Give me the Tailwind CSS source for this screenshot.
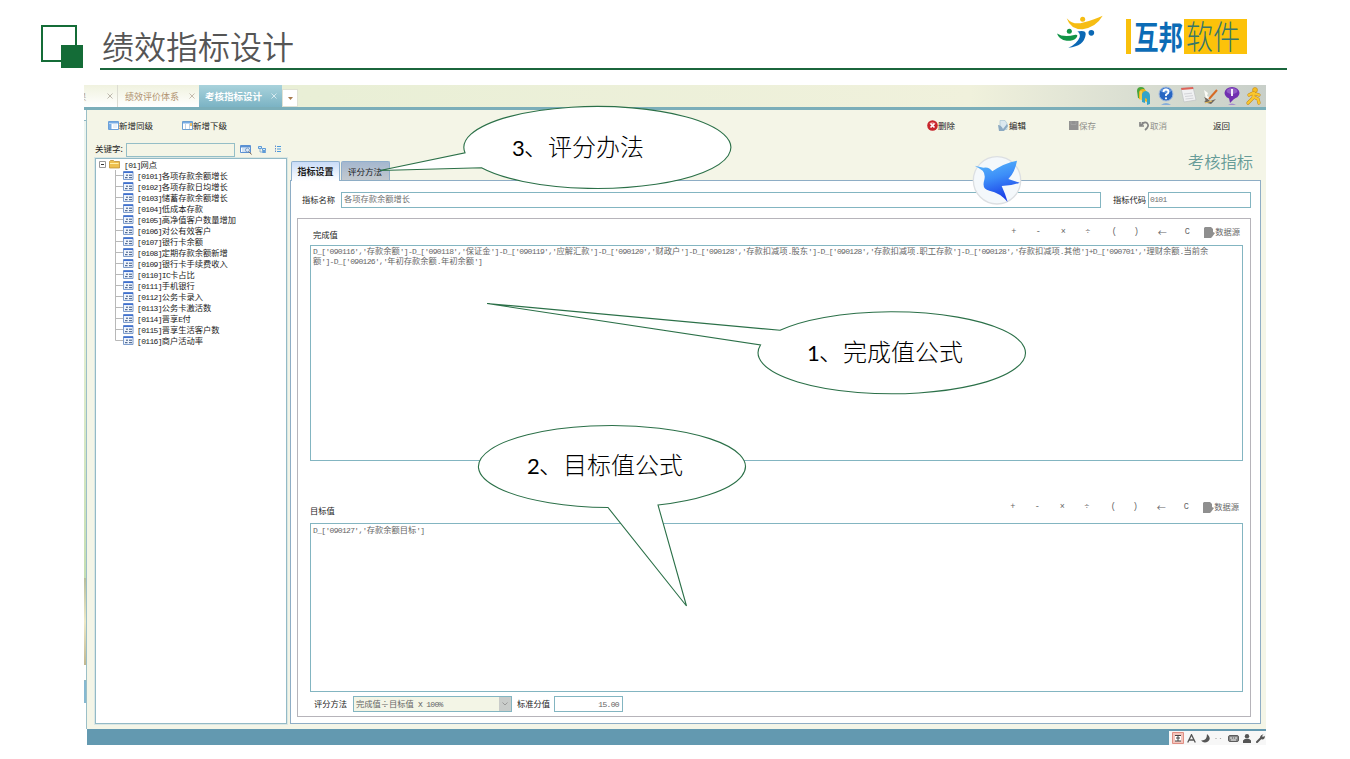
<!DOCTYPE html>
<html lang="zh-CN">
<head>
<meta charset="utf-8">
<title>绩效指标设计</title>
<script src="https://cdn.jsdelivr.net/npm/@tailwindcss/browser@4"></script>
</head>
<body class="relative w-[1350px] h-[759px] overflow-hidden bg-white font-['Noto_Sans_CJK_SC',sans-serif] text-[8.25px] leading-[11px] text-[#1c1c1c] whitespace-nowrap">

<!-- slide header -->
<header class="flex h-[85px] pl-[41px]">
  <svg class="mt-[25px] w-[42px] h-[43px]" viewBox="0 0 42 43"><rect x="1" y="1" width="34" height="35" fill="none" stroke="#146c37" stroke-width="2"/><rect x="20" y="20" width="22" height="23" fill="#146c37"/></svg>
  <div class="ml-[17px] mt-[20px] w-[1187px] h-[50px] border-b-2 border-[#1b663c] flex">
    <h1 class="ml-[2px] mt-[2px] text-[32px] leading-[46px] text-[#555] font-[350]">绩效指标设计</h1>
    <div class="ml-[761px] -mt-[7px] flex">
      <svg class="w-[50px] h-[37px]" viewBox="45 25 150 110">
        <path d="M80 40Q100 62 130 53Q165 44 188 33Q168 68 128 73Q92 74 80 40" fill="#f6bd13"/><path d="M100 47Q125 60 150 42L128 34Z" fill="#fff"/><circle cx="128" cy="43" r="7.5" fill="#f6bd13"/>
        <path d="M51 86Q70 99 106 90Q117 89 108 100Q98 109 80 108Q57 105 51 86" fill="#119447"/><circle cx="88" cy="79" r="7.5" fill="#119447"/>
        <path d="M112 80Q139 75 137 89Q133 124 85 129Q112 116 119 97Q122 86 112 80" fill="#0b68b4"/><circle cx="154" cy="84" r="8.5" fill="#0b68b4"/>
      </svg>
      <div class="ml-[21px] mt-[6px] w-[5px] h-[35px] bg-[#f9c00c]"></div>
      <div class="ml-[3px] mt-[5px] w-[50px] h-[35px] flex items-center text-[24.5px] font-bold text-[#0c6cb6]"><span class="scale-y-[1.28]">互邦</span></div>
      <div class="mt-[6px] w-[63px] h-[35px] bg-[#fcc20a] flex items-center pl-[2px] pb-[2px] text-[27px] font-light text-[#36766b]"><span class="scale-y-[1.2]">软件</span></div>
    </div>
  </div>
</header>

<main class="ml-[84px] w-[1182px] h-[660px] flex flex-col">
  <!-- window tabs -->
  <nav class="h-[25px] border-b-3 border-[#7baeb9] flex bg-linear-to-r from-[#e9efd6] from-20% via-[#f0f1dc] via-75% to-[#c8cfc9]">
    <div class="w-[34px] bg-linear-to-b from-[#f0f2df] to-white border-r border-[#dcdcd2] flex items-center text-[#b1a08c] overflow-hidden"><span class="-ml-[6px]">果</span><svg class="ml-[21px] w-[6px] h-[6px]" viewBox="0 0 6 6"><path d="M.5.5l5 5m0-5l-5 5" stroke="#bdb8ac"/></svg></div>
    <div class="w-[81px] bg-linear-to-b from-[#f0f2df] to-white flex items-center pl-[7px] text-[#b0926f] text-[9px]">绩效评价体系<svg class="ml-[10px] w-[6px] h-[6px]" viewBox="0 0 6 6"><path d="M.5.5l5 5m0-5l-5 5" stroke="#c4bcae"/></svg></div>
    <div class="w-[83px] bg-linear-to-b from-[#a9d3dc] to-[#7bb3c4] flex items-center pl-[6px] text-white text-[9.5px] font-bold">考核指标设计<svg class="ml-[9px] w-[6px] h-[6px]" viewBox="0 0 6 6"><path d="M.5.5l5 5m0-5l-5 5" stroke="#d5e9ef"/></svg></div>
    <div class="w-[16px] h-[18px] mt-[4px] bg-white border border-[#e0e2d4] flex items-center justify-center"><svg class="w-[5px] h-[3px]" viewBox="0 0 5 3"><path d="M0 0h5L2.500 3z" fill="#a77a4c"/></svg></div>
    <div class="ml-auto flex gap-[4px] pt-[1px] pr-[3px]">
      <svg class="w-[18px] h-[20px]" viewBox="0 0 18 20"><path d="M2 5q0-4 4-4t4 4v9l-7-2z" fill="#4aa53a"/><path d="M4 6q1-3 4-3t4 4v9l-8-3z" fill="#edb520"/><path d="M7 16V8q1-3 4-3 4 1 4 5v8l-3 1v-6l-2-1v5z" fill="#35a4c8"/><path d="M6 5v9" stroke="#f8e67b"/></svg>
      <svg class="w-[18px] h-[20px]" viewBox="0 0 18 20"><circle cx="9" cy="8" r="7" fill="#2866c2" stroke="#a5bdde"/><path d="M3 5q6-6 12 0-6 4-12 0" fill="#79a9e9" opacity=".7"/><path d="M6.500 6q0-2.500 2.500-2.500T11.500 6Q11.500 7.500 9 8.500V10" fill="none" stroke="#fff" stroke-width="1.800"/><circle cx="9" cy="12.300" r="1.100" fill="#fff"/><path d="M4 19q5-4 10 0" fill="#86aedb"/></svg>
      <svg class="w-[18px] h-[20px]" viewBox="0 0 18 20"><path d="M2 2l12-1 3 13-12 2z" fill="#f0f1f2" stroke="#bfc1c3" stroke-width=".7"/><path d="M2 2l12-1 .5 2-12 1z" fill="#dd6358"/><path d="M5 8l8-.8M6 10.500l8-.8M6.500 13l8-.8" stroke="#d3d4d8"/></svg>
      <svg class="w-[18px] h-[20px]" viewBox="0 0 18 20"><path d="M3 4l4 3-1 3 4 2-5 1" fill="#fbfbf5"/><path d="M3 11q3 1 6 4l6-2-5 5-7-2q3-1 0-5" fill="#70675e"/><path d="M8 13L16 4" stroke="#d66a25" stroke-width="2"/><path d="M4 17l7-2" stroke="#ecc15a"/></svg>
      <svg class="w-[18px] h-[20px]" viewBox="0 0 18 20"><ellipse cx="9" cy="7" rx="7.500" ry="6" fill="#7130b0"/><path d="M6 12l1 5 5-5z" fill="#7130b0"/><ellipse cx="9" cy="5" rx="5.500" ry="3" fill="#a97bd5" opacity=".6"/><path d="M9 3v7" stroke="#fff" stroke-width="1.800"/><path d="M5 19q4-3 8 0" fill="#a48acd"/></svg>
      <svg class="w-[18px] h-[20px]" viewBox="0 0 18 20"><circle cx="10" cy="4" r="2.500" fill="#f6bd20" stroke="#c58a18" stroke-width=".6"/><path d="M8 7L4 9M9 7l-1 5-5 5M9 11l4 2 1 4M11 8l3 1" fill="none" stroke="#c58a18" stroke-width="3.200" stroke-linecap="round"/><path d="M8 7L4 9M9 7l-1 5-5 5M9 11l4 2 1 4M11 8l3 1" fill="none" stroke="#fac72e" stroke-width="2.300" stroke-linecap="round"/></svg>
    </div>
  </nav>

  <div class="flex h-[619px]">
    <!-- sliver of the page behind -->
    <div class="w-[3px] h-[619px] flex flex-col bg-[#e9f1dd] border-r border-[#9bbfc7]">
      <div class="h-[11px] bg-white border-b border-[#8fb7c3]"></div>
      <div class="h-[457px] bg-linear-to-b from-[#edf5f1] via-[#e2eed0] to-[#c6dfb2]"></div>
      <div class="h-[87px] bg-linear-to-b from-[#b9bf9b] via-[#eee9c6] to-[#c2b890]"></div>
      <div class="h-[16px] bg-white border-b border-[#8fb7c3]"></div>
      <div class="h-[22px] bg-[#86b9d1]"></div>
      <div class="flex-1 bg-white"></div>
    </div>

    <div class="w-[202px] bg-[#f4f5e7] pl-[8px] flex flex-col">
      <div class="h-[33px] flex items-center pl-[13px] pb-[2px]">
        <svg class="w-[11px] h-[9px]" viewBox="0 0 11 9"><path d="M.5.5h10v8H.5z" fill="#fff" stroke="#6b9fd8"/><path d="M1 1h9v1.500H1zM1 3h2.500v5H1z" fill="#77ace4"/><path d="M5 4h4M5 6h4" stroke="#d5e3f2"/></svg><span class="text-[8.5px] mr-[29px]">新增同级</span>
        <svg class="w-[11px] h-[9px]" viewBox="0 0 11 9"><path d="M.5.5h10v8H.5z" fill="#fff" stroke="#6b9fd0"/><path d="M1 1h9v1.500H1z" fill="#77ace4"/><path d="M3.500 3v5M7.500 3v5" stroke="#c3d2e0"/><path d="M8 2h2v3H8z" fill="#edbe64"/></svg><span class="text-[8.5px]">新增下级</span>
      </div>
      <div class="h-[14px] flex items-center">
        <span class="w-[31px] -mt-[3px] text-[8.5px]">关键字:</span>
        <div class="w-[109px] h-[14px] border border-[#94bec7]"></div>
        <svg class="ml-[5px] -mt-[2px] w-[12px] h-[11px]" viewBox="0 0 12 11"><path d="M.5 1.500h10v7H.5z" fill="#fff" stroke="#5b91d3"/><path d="M1 2h9v1.500H1z" fill="#5b91d3"/><path d="M2 5h5M2 7h4" stroke="#a5c6ea"/><circle cx="7.500" cy="6" r="2" fill="#dceafa" stroke="#658ebd" stroke-width=".8"/><path d="M9 7.500l2.500 3" stroke="#77624e"/></svg>
        <svg class="ml-[6px] -mt-[2px] w-[9px] h-[9px]" viewBox="0 0 9 9"><path d="M.5 1.500h3v2h-3zM4.500 3.500h3v2h-3zM4.500 6.500h3v1h-3z" fill="#d6ebfb" stroke="#3e86d0" stroke-width=".8"/><path d="M2 4v3h2" fill="none" stroke="#79a3cf" stroke-width=".8"/></svg>
        <svg class="ml-[7px] -mt-[2px] w-[8px] h-[8px]" viewBox="0 0 8 8"><path d="M1.500.5v7" stroke="#6a8fcb" stroke-dasharray="1.500 1"/><path d="M3 1.500h4M3 4h4M3 6.500h4" stroke="#4a9ade"/></svg>
      </div>
      <div class="mt-px w-[192px] h-[566px] border border-[#93bac6] outline outline-[#dbe7e4] bg-white">
        <div class="h-[11px] flex items-center pl-[3px]">
          <svg class="w-[7px] h-[7px]" viewBox="0 0 7 7"><path d="M.5.500h6v6h-6z" fill="#fff" stroke="#989898"/><path d="M2 3.500h3" stroke="#333"/></svg>
          <svg class="ml-[3px] w-[11px] h-[9px]" viewBox="0 0 11 9"><path d="M.5 1.500l1-1h3l1 1h5v6.500H.5z" fill="#eec050" stroke="#b78628" stroke-width=".7"/><path d="M1 3h9l-1 1H1z" fill="#fff0a8"/></svg>
          <span class="ml-[4px]" data-mix>[01]网点</span>
        </div>
        <ul id="tree"></ul>
      </div>
    </div>

    <div class="w-[977px] bg-[#f4f5e7] flex flex-col pr-[5px]">
      <div class="h-[33px] flex items-center pl-[638px] pb-[2px] text-[8.5px]">
        <svg class="w-[11px] h-[11px]" viewBox="0 0 11 11"><circle cx="5.500" cy="5.500" r="5.300" fill="#c7262d"/><path d="M2 4q3-4 7 0" fill="#e8787b"/><path d="M3.500 3.500l4 4m0-4l-4 4" stroke="#fff" stroke-width="1.700"/></svg><span class="w-[60px]">删除</span>
        <svg class="w-[11px] h-[11px]" viewBox="0 0 11 11"><path d="M2 .5h5l2 3v6H2z" fill="#dbe8ef" stroke="#a9c5d5" stroke-width=".7"/><path d="M0 5q3 0 5 4l4-5 1 2-4 5H1z" fill="#8ba9c2"/></svg><span class="w-[60px]">编辑</span>
        <svg class="w-[10px] h-[9px]" viewBox="0 0 10 9"><path d="M0 0h9.500v9H0z" fill="#929292"/><path d="M2 0v3.500h5V0" fill="none" stroke="#acacac" stroke-width=".6"/></svg><span class="w-[60px] text-[#8f8f8a]">保存</span>
        <svg class="w-[11px] h-[10px]" viewBox="0 0 11 10"><path d="M1 1v4h4M3.500 1v3M1.500 5Q5 0 8 2q3 3-2 7" fill="none" stroke="#858585" stroke-width="1.700"/></svg><span class="w-[63px] text-[#8f8f8a]">取消</span>
        <span>返回</span>
      </div>
      <div class="h-[37px] flex">
        <div class="mt-[18px] ml-[2px] w-[49px] h-[20px] z-10 border border-b-0 border-[#8fb0ce] rounded-t-[2px] bg-linear-to-b from-[#c9dcf7] to-white pt-[4px] text-center font-bold text-[9px]">指标设置</div>
        <div class="mt-[18px] ml-px w-[49px] h-[19px] border border-b-0 border-[#90aecb] rounded-t-[2px] bg-linear-to-b from-[#a4b7cf] to-[#c3c9cf] pt-[4px] pr-px text-center text-[8.5px]">评分方法</div>
        <div class="ml-auto mr-[8px] pt-[8px] text-[16.3px] leading-[20px] text-[#669b98] font-[350]">考核指标</div>
      </div>

      <!-- tab page -->
      <div class="w-[971px] ml-px h-[544px] border border-[#8eadc5] bg-white px-[6px] pb-[6px] flex flex-col">
        <div class="h-[37px] flex pt-[11px]">
          <span class="pl-[5px] pt-[2px] w-[44px]">指标名称</span>
          <div class="w-[760px] h-[16px] border border-[#83b5c1] pl-[2px] text-[#707070] leading-[11px]">各项存款余额增长</div>
          <span class="ml-[12px] pt-[2px] w-[35px]">指标代码</span>
          <div class="w-[103px] h-[16px] border border-[#83b5c1] pl-px text-[#707070] leading-[11px]" data-mix>0101</div>
        </div>
        <section class="w-[954px] h-[499px] border border-[#b6b4ba] pl-[12px]">
          <div class="h-[26px] flex items-center pr-[10px]">
            <span class="ml-[3px] mt-[4px]">完成值</span>
            <div class="ops ml-auto flex items-center text-[#666]"></div>
          </div>
          <div class="w-[933px] h-[216px] border border-[#83b5c1] pl-[2px] leading-[9.5px] text-[#666]"><p data-mix>D_['090116','存款余额']-D_['090118','保证金']-D_['090119','应解汇款']-D_['090120','财政户']-D_['090128','存款扣减项.股东']-D_['090128','存款扣减项.职工存款']-D_['090128','存款扣减项.其他']+D_['090701','理财余额.当前余</p><p data-mix>额']-D_['090126','年初存款余额.年初余额']</p></div>
          <div class="h-[62px] flex items-end pr-[11px] pb-[10px]">
            <span class="-mb-[3px]">目标值</span>
            <div class="ops ml-auto flex items-center text-[#666]"></div>
          </div>
          <div class="w-[933px] h-[169px] border border-[#83b5c1] pl-[2px] leading-[10px] text-[#666]"><p data-mix>D_['090127','存款余额目标']</p></div>
          <div class="flex items-start pt-[4px]">
            <span class="ml-[4px] mt-[2px] w-[39px]">评分方法</span>
            <div class="w-[159px] h-[16px] border border-[#83b5c1] bg-[#f3f5e6] pl-[2px] flex text-[#666] leading-[12px]"><span data-mix>完成值÷目标值 X 100%</span><div class="ml-auto w-[12px] h-[14px] bg-[#c9ccca] flex items-center justify-center"><svg class="w-[6px] h-[4px]" viewBox="0 0 6 4"><path d="M.5.500L3 3 5.500.500" fill="none" stroke="#999"/></svg></div></div>
            <span class="ml-[5px] mt-[2px] w-[37px]">标准分值</span>
            <div class="w-[69px] h-[16px] border border-[#83b5c1] pr-[3px] text-right text-[#666] leading-[12px]" data-mix>15.00</div>
          </div>
        </section>
      </div>
    </div>
  </div>

  <!-- status bar with input-method tray -->
  <footer class="ml-[3px] h-[16px] bg-[#6399b0] flex justify-end pt-[2px]">
    <div class="w-[97px] h-[14px] bg-[#f7f7f7] flex items-center pl-[3px]">
      <svg class="w-[12px] h-[12px]" viewBox="0 0 12 12"><path d="M.5.500h11v11H.5z" fill="#f3c5bd" stroke="#e08e83"/><path d="M3 3h6v6H3z" fill="#fff"/><path d="M3 3.500h6M6 3.500V9M3 9h6M4 6h4" stroke="#444"/></svg>
      <svg class="ml-[3px] w-[9px] h-[9px]" viewBox="0 0 9 9"><path d="M.7 8.500L4.500.700l3.800 7.800M2 6h5" fill="none" stroke="#555" stroke-width="1.300"/></svg>
      <svg class="ml-[5px] w-[9px] h-[9px]" viewBox="0 0 9 9"><path d="M6 0q5 4 1 7.500Q3 10 0 6.500 6 7 6 0" fill="#555"/></svg>
      <svg class="ml-[5px] w-[7px] h-[9px]" viewBox="0 0 7 9"><path d="M1 4v1M5.500 4v1" stroke="#aaa" stroke-width="1.200"/></svg>
      <svg class="ml-[6px] w-[11px] h-[7px]" viewBox="0 0 11 7"><rect x=".5" y=".5" width="10" height="6" rx="1.500" fill="#888" stroke="#5c5c5c"/><path d="M2 3h2m1 0h1m1 0h2M3 5h5" stroke="#eee"/></svg>
      <svg class="ml-[4px] w-[8px] h-[9px]" viewBox="0 0 8 9"><circle cx="4" cy="2.300" r="2.200" fill="#555"/><path d="M0 9V6.500Q2 4 4 5q2-1 4 1.500V9z" fill="#555"/></svg>
      <svg class="ml-[5px] w-[9px] h-[9px]" viewBox="0 0 9 9"><path d="M1 8l4-4" stroke="#555" stroke-width="2" stroke-linecap="round"/><path d="M7.500.500L6 2l1 1 1.500-1.200Q9.500 4.500 7 5.500 4 5.500 4 3 5 0 7.500.500" fill="#555"/></svg>
    </div>
  </footer>
</main>

<!-- bird badge floating over the form -->
<svg class="absolute left-[972px] top-[155px] w-[50px] h-[50px]" viewBox="216 150 150 150">
  <defs><linearGradient id="bird" x1="0" y1="0" x2="0.300" y2="1"><stop offset="0" stop-color="#5cbcfb"/><stop offset=".5" stop-color="#3c8df8"/><stop offset="1" stop-color="#1a3fe8"/></linearGradient></defs>
  <circle cx="291" cy="226" r="71" fill="#f4f8fb" stroke="#dcdfe2" stroke-width="4"/>
  <path d="M224 182L250 188Q267 184 277 199Q312 174 351 167Q345 202 325 222L359 233Q335 243 305 243Q315 264 323 291Q300 263 268 257Q244 252 253 224Q257 207 248 197Q236 188 224 182Z" fill="url(#bird)"/>
</svg>

<!-- speech-bubble callouts -->
<svg class="absolute inset-0 w-[1350px] h-[759px]" viewBox="0 0 1350 759" fill="#fff" stroke="#2b7048" stroke-width="1.100">
  <path d="M465 152.800A133.500 41 0 1 1 481.500 167.800L380 170.500Z"/>
  <path d="M780 330.300A133.700 41 0 1 1 760.500 345L487 303.500Z"/>
  <path d="M608 507.500A133.500 41 0 1 1 658 505L686.500 606Z"/>
</svg>
<div class="absolute left-[512px] top-[130px] text-[24px] leading-[32px] text-black font-light"><span class="inline-block w-[12px] font-['Lato'] font-normal text-[22px]">3</span>、评分办法</div>
<div class="absolute left-[807px] top-[335px] text-[24px] leading-[32px] text-black font-light"><span class="inline-block w-[12px] font-['Lato'] font-normal text-[22px]">1</span>、完成值公式</div>
<div class="absolute left-[527px] top-[448px] text-[24px] leading-[32px] text-black font-light"><span class="inline-block w-[12px] font-['Lato'] font-normal text-[22px]">2</span>、目标值公式</div>

<script>
const items = ['[0101]各项存款余额增长','[0102]各项存款日均增长','[0103]储蓄存款余额增长','[0104]低成本存款','[0105]高净值客户数量增加','[0106]对公有效客户','[0107]银行卡余额','[0108]定期存款余额新增','[0109]银行卡手续费收入','[0110]IC卡占比','[0111]手机银行','[0112]公务卡录入','[0113]公务卡激活数','[0114]晋享E付','[0115]晋享生活客户数','[0116]商户活动率'];
document.getElementById('tree').innerHTML = items.map((t, i) => `<li class="h-[11px] flex items-center pl-[19px]"><svg class="w-[8px] h-[11px]" viewBox="0 0 8 11"><path d="M.5 0V${i === items.length - 1 ? 5.5 : 11}M.5 5.500H8" fill="none" stroke="#b8b8b8"/></svg><svg class="w-[11px] h-[9px]" viewBox="0 0 11 9"><path d="M.5.500h9.500v8H.5z" fill="#eef4fc" stroke="#7d9ccc"/><path d="M.5.500h9.500v1.500H.5z" fill="#3f70d2"/><path d="M3 4.200h2M6 4.200h3M2 6.700h2.500M6 6.700h3" stroke="#34507e"/></svg><span class="ml-[3px]" data-mix>${t}</span></li>`).join('');

const widths = ['w-[25px]','w-[24px]','w-[26px]','w-[23px]','w-[30px]','w-[14px]','w-[38px]','w-[12px]'];
const signs = ['+','-','×','÷','(',')','←','C'];
document.querySelectorAll('.ops').forEach(el => {
  el.innerHTML = signs.map((s, i) => s === '←'
      ? `<span class="${widths[i]} text-center text-[9px]">${s}</span>`
      : `<span class="${widths[i]} text-center font-['Liberation_Mono',monospace] text-[8.5px]">${s}</span>`).join('') +
    `<svg class="ml-[11px] w-[11px] h-[11px]" viewBox="0 0 11 11"><path d="M1 0h6l2 2v3l2 1-3 4-1 1H0V1z" fill="#8f8f8f"/></svg><span class="-mt-[2px]">数据源</span>`;
});

// half-width runs take exactly half of a full-width cell
document.querySelectorAll('[data-mix]').forEach(el => {
  el.innerHTML = el.textContent.replace(/[\x20-\x7e]+/g, m => `<span class="font-['Liberation_Mono',monospace] text-[8px] leading-[0] tracking-[-0.675px] whitespace-pre">${m}</span>`);
});
</script>
</body>
</html>
